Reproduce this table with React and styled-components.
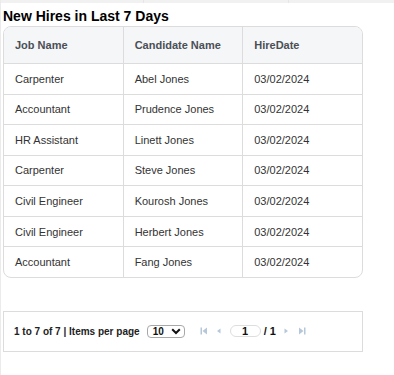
import React from "react";
import styled, { createGlobalStyle } from "styled-components";

const GlobalStyle = createGlobalStyle`
  html, body {
    margin: 0;
    padding: 0;
    background: #ffffff;
    font-family: "Liberation Sans", Arial, sans-serif;
  }
`;

const hires = [
  { job: "Carpenter", name: "Abel Jones", date: "03/02/2024" },
  { job: "Accountant", name: "Prudence Jones", date: "03/02/2024" },
  { job: "HR Assistant", name: "Linett Jones", date: "03/02/2024" },
  { job: "Carpenter", name: "Steve Jones", date: "03/02/2024" },
  { job: "Civil Engineer", name: "Kourosh Jones", date: "03/02/2024" },
  { job: "Civil Engineer", name: "Herbert Jones", date: "03/02/2024" },
  { job: "Accountant", name: "Fang Jones", date: "03/02/2024" },
];

export default function App() {
  return (
    <Page>
      <GlobalStyle />
      <TopStrip>
        <span />
        <span />
        <span />
      </TopStrip>
      <Content>
        <Title>New Hires in Last 7 Days</Title>
        <TableCard>
          <Grid>
            <thead>
              <tr>
                <Th>Job Name</Th>
                <Th>Candidate Name</Th>
                <Th $last>HireDate</Th>
              </tr>
            </thead>
            <tbody>
              {hires.map((h, i) => (
                <Row key={i} $lastRow={i === hires.length - 1}>
                  <Td>{h.job}</Td>
                  <Td>{h.name}</Td>
                  <Td $last>{h.date}</Td>
                </Row>
              ))}
            </tbody>
          </Grid>
        </TableCard>

        <Pager>
          <PagerText>1 to 7 of 7 | Items per page</PagerText>
          <PageSize>
            <span>10</span>
            <svg width="10" height="7" viewBox="0 0 10 7">
              <path d="M1.2 1.2 L5 5 L8.8 1.2" fill="none" stroke="#111" strokeWidth="2" />
            </svg>
          </PageSize>
          <NavIcons>
            <NavBtn>
              <svg width="8" height="8" viewBox="0 0 8 8">
                <rect x="0.5" y="0.5" width="1.5" height="7" fill="currentColor" />
                <path d="M7 0.5 L2.5 4 L7 7.5 Z" fill="currentColor" />
              </svg>
            </NavBtn>
            <NavBtn>
              <svg width="5" height="6" viewBox="0 0 5 6">
                <path d="M4.5 0.5 L1 3 L4.5 5.5 Z" fill="currentColor" />
              </svg>
            </NavBtn>
            <PageInput>1</PageInput>
            <PageTotal>/ 1</PageTotal>
            <NavBtn>
              <svg width="5" height="6" viewBox="0 0 5 6">
                <path d="M0.5 0.5 L4 3 L0.5 5.5 Z" fill="currentColor" />
              </svg>
            </NavBtn>
            <NavBtn>
              <svg width="8" height="8" viewBox="0 0 8 8">
                <path d="M1 0.5 L5.5 4 L1 7.5 Z" fill="currentColor" />
                <rect x="6" y="0.5" width="1.5" height="7" fill="currentColor" />
              </svg>
            </NavBtn>
          </NavIcons>
        </Pager>
      </Content>
    </Page>
  );
}

const Page = styled.div`
  width: 394px;
  height: 375px;
  border-left: 1px solid #ebebeb;
  box-sizing: border-box;
  overflow: hidden;
`;

const TopStrip = styled.div`
  display: grid;
  grid-template-columns: 142px 144px 1fr;
  height: 3px;
  background: #e6e6e6;
  gap: 1px;

  span {
    background: #f1f1f1;
  }
`;

const Content = styled.div`
  padding: 0 0 0 2px;
`;

const Title = styled.h2`
  margin: 0;
  padding-top: 4px;
  font-size: 14px;
  line-height: 19px;
  font-weight: 700;
  color: #000;
`;

const TableCard = styled.div`
  width: 360px;
  box-sizing: border-box;
  border: 1px solid #dcdcdc;
  border-radius: 8px;
  overflow: hidden;
`;

const Grid = styled.table`
  width: 100%;
  border-collapse: separate;
  border-spacing: 0;
  table-layout: fixed;
  font-size: 11px;
  color: #333;
`;

const Th = styled.th`
  height: 36px;
  padding: 0 0 0 11px;
  text-align: left;
  font-weight: 700;
  color: #4a4f56;
  background: #f5f6f8;
  border-bottom: 1px solid #dcdcdc;
  border-right: ${(p) => (p.$last ? "none" : "1px solid #dcdcdc")};
  width: 33.33%;
`;

const Row = styled.tr`
  td {
    border-bottom: ${(p) => (p.$lastRow ? "none" : "1px solid #dcdcdc")};
  }
`;

const Td = styled.td`
  height: 29.57px;
  padding: 0 0 0 11px;
  border-right: ${(p) => (p.$last ? "none" : "1px solid #dcdcdc")};
  color: #333;
  white-space: nowrap;
`;

const Pager = styled.div`
  display: flex;
  align-items: center;
  width: 360px;
  height: 41px;
  box-sizing: border-box;
  margin-top: 33px;
  padding-left: 10px;
  border: 1px solid #dcdcdc;
`;

const PagerText = styled.span`
  font-size: 10px;
  font-weight: 700;
  color: #222;
`;

const PageSize = styled.div`
  display: flex;
  align-items: center;
  justify-content: space-between;
  width: 38px;
  height: 13px;
  margin-left: 7px;
  padding: 0 3px 0 5px;
  box-sizing: border-box;
  border: 1px solid #a8a8a8;
  border-radius: 4px;
  font-size: 10px;
  font-weight: 700;
  color: #111;
`;

const NavIcons = styled.div`
  display: flex;
  align-items: center;
  margin-left: 15px;
  gap: 7px;
  color: #b5c8da;
`;

const NavBtn = styled.span`
  display: flex;
  align-items: center;
  justify-content: center;
  width: 8px;
  height: 10px;
`;

const PageInput = styled.div`
  width: 31px;
  height: 12px;
  box-sizing: border-box;
  border: 1px solid #dedede;
  border-radius: 6px;
  text-align: center;
  font-size: 11px;
  line-height: 10px;
  font-weight: 700;
  color: #111;
`;

const PageTotal = styled.span`
  margin-left: -4px;
  font-size: 11px;
  font-weight: 700;
  color: #111;
`;
